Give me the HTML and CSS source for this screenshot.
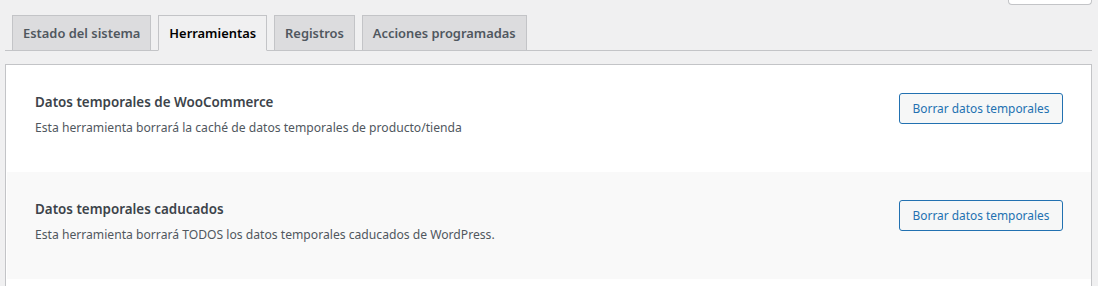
FILE: index.html
```html
<!DOCTYPE html>
<html lang="es">
<head>
<meta charset="utf-8">
<title>Estado de WooCommerce - Herramientas</title>
<link rel="stylesheet" href="styles.css">
</head>
<body>
<div class="wrap">
  <div class="screen-meta-links">
    <div class="help-tab"></div>
  </div>
  <nav class="nav-tab-wrapper">
    <a class="nav-tab">Estado del sistema</a>
    <a class="nav-tab nav-tab-active">Herramientas</a>
    <a class="nav-tab">Registros</a>
    <a class="nav-tab">Acciones programadas</a>
  </nav>
  <div class="tools-panel">
    <div class="tool-row">
      <div class="tool-info">
        <strong class="tool-name">Datos temporales de WooCommerce</strong>
        <p class="tool-desc">Esta herramienta borrará la caché de datos temporales de producto/tienda</p>
      </div>
      <button class="button" type="button">Borrar datos temporales</button>
    </div>
    <div class="tool-row tool-row-alt">
      <div class="tool-info">
        <strong class="tool-name">Datos temporales caducados</strong>
        <p class="tool-desc">Esta herramienta borrará TODOS los datos temporales caducados de WordPress.</p>
      </div>
      <button class="button" type="button">Borrar datos temporales</button>
    </div>
    <div class="tool-row tool-row-empty"></div>
  </div>
</div>
</body>
</html>
```
FILE: styles.css
```css
html, body {
  margin: 0;
  padding: 0;
}
body {
  background: #f0f0f1;
  font-family: "Noto Sans", "Open Sans", sans-serif;
  color: #3c434a;
  overflow: hidden;
}
.wrap {
  margin: 0 6px 0 5px;
}
.screen-meta-links {
  display: flex;
  justify-content: flex-end;
  height: 5px;
}
.help-tab {
  width: 84px;
  height: 30px;
  margin-top: -25px;
  box-sizing: border-box;
  background: #fff;
  border: 1px solid #c3c4c7;
  border-top: none;
  border-radius: 0 0 4px 4px;
}
.nav-tab-wrapper {
  display: flex;
  gap: 7px;
  margin-top: 10px;
  padding-left: 7px;
  height: 35px;
  border-bottom: 1px solid #c3c4c7;
}
.nav-tab {
  box-sizing: border-box;
  height: 36px;
  padding: 5px 10px;
  font-size: 12.9px;
  line-height: 24px;
  font-weight: 600;
  color: #50575e;
  background: #dcdcde;
  border: 1px solid #c3c4c7;
  text-decoration: none;
  white-space: nowrap;
}
.nav-tab-active {
  color: #000;
  background: #f0f0f1;
  border-bottom-color: #f0f0f1;
}
.tools-panel {
  margin-top: 13px;
  background: #fff;
  border: 1px solid #c3c4c7;
  border-bottom: none;
  padding: 0 0 0 1px;
}
.tool-row {
  display: flex;
  justify-content: space-between;
  align-items: flex-start;
  padding: 27px 28px 34px 28px;
}
.tool-row-alt {
  background: #f9f9f9;
}
.tool-row-empty {
  height: 40px;
  padding: 0;
}
.tool-name {
  display: block;
  font-size: 13.4px;
  line-height: 20px;
  font-weight: 600;
  color: #3c434a;
}
.tool-desc {
  margin: 6px 0 0;
  font-size: 12.15px;
  line-height: 20px;
  color: #50575e;
}
.button {
  box-sizing: border-box;
  width: 164px;
  height: 31px;
  margin-top: 1px;
  padding: 0;
  font-family: inherit;
  font-size: 11.9px;
  line-height: 29px;
  color: #2271b1;
  background: #f6f7f7;
  border: 1px solid #2271b1;
  border-radius: 3px;
  text-align: center;
  cursor: pointer;
}
```
